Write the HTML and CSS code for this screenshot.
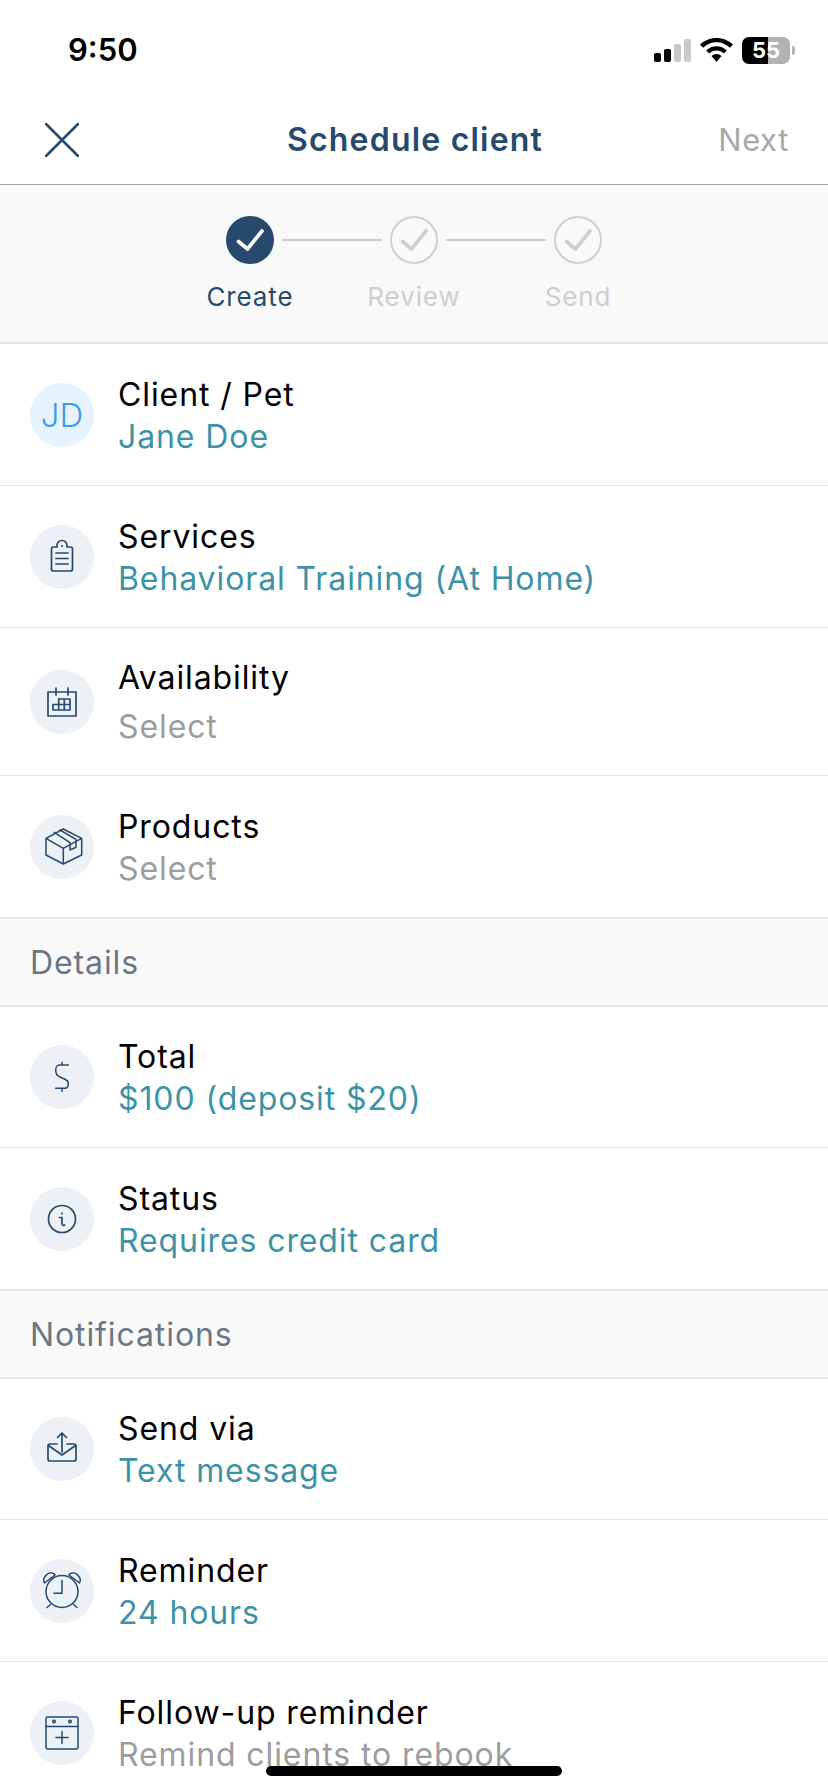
FILE: index.html
```html
<!DOCTYPE html>
<html lang="en">
<head>
<meta charset="utf-8">
<title>Schedule client</title>
<link rel="stylesheet" href="styles.css">
</head>
<body>
<div class="page">
  <div class="status">
    <span class="time">9:50</span>
    <div class="status-icons">
      <div class="signal"><i class="b1"></i><i class="b2"></i><i class="b3"></i><i class="b4"></i></div>
      <svg class="wifi" width="33" height="24" viewBox="0 0 33 24"><path d="M16.5 0C10 0 4.6 2.4 0 6.6l3 3.2C6.8 6.3 11.3 4.3 16.5 4.3s9.7 2 13.5 5.5l3-3.2C28.4 2.400 23 0 16.500 0z"/><path d="M16.500 8.200c-4 0-7.400 1.500-10.300 4.200l3 3.200c2-1.900 4.400-3 7.300-3s5.300 1.100 7.300 3l3-3.200c-2.900-2.700-6.300-4.200-10.300-4.200z"/><path d="M16.500 16c-2 0-3.600.7-5 2l5 6 5-6c-1.400-1.300-3-2-5-2z"/></svg>
      <div class="battery"><span class="battery-num">55</span></div>
      <i class="nub"></i>
    </div>
  </div>

  <header class="nav">
    <svg class="close" width="34" height="34" viewBox="0 0 34 34"><path d="M1 1l32 32M33 1L1 33"/></svg>
    <h1 class="title">Schedule client</h1>
    <span class="next">Next</span>
  </header>

  <section class="steps">
    <div class="track">
      <svg class="dot" width="48" height="48" viewBox="0 0 48 48"><circle class="dot-on" cx="24" cy="24" r="24"/><path class="tick-on" d="M12.500 25.500l9 7.500L36 15"/></svg>
      <i class="line"></i>
      <svg class="dot" width="48" height="48" viewBox="0 0 48 48"><circle class="dot-off" cx="24" cy="24" r="23"/><path class="tick-off" d="M12.500 25.500l9 7.500L36 15"/></svg>
      <i class="line"></i>
      <svg class="dot" width="48" height="48" viewBox="0 0 48 48"><circle class="dot-off" cx="24" cy="24" r="23"/><path class="tick-off" d="M12.500 25.500l9 7.500L36 15"/></svg>
    </div>
    <div class="labels">
      <span class="label label-on">Create</span>
      <span class="label">Review</span>
      <span class="label">Send</span>
    </div>
  </section>

  <div class="row">
    <div class="badge badge-jd">JD</div>
    <div class="text"><div class="name">Client / Pet</div><div class="val">Jane Doe</div></div>
  </div>
  <div class="row">
    <div class="badge"><svg class="ic" viewBox="0 0 64 64"><path d="M27 22v-1.500a5 5 0 0 1 10 0V22h3.500a2 2 0 0 1 2 2v20a2 2 0 0 1-2 2h-17a2 2 0 0 1-2-2V24a2 2 0 0 1 2-2z"/><path d="M26 28h12M26 33.500h12M26 39h12"/><circle class="fill" cx="32" cy="21" r="1"/></svg></div>
    <div class="text"><div class="name">Services</div><div class="val">Behavioral Training (At Home)</div></div>
  </div>
  <div class="row row-tall">
    <div class="badge"><svg class="ic" viewBox="0 0 64 64"><path d="M18 22h28v24H18zM26 18v7M38 18v7"/><path d="M23 34.500h17V40H23zM28.700 29h11.300v11M28.700 29v11M34.300 29v11"/></svg></div>
    <div class="text"><div class="name">Availability</div><div class="val val-muted">Select</div></div>
  </div>
  <div class="row">
    <div class="badge"><svg class="ic ic-thin" viewBox="0 0 64 64"><path d="M33.300 14L16 23.300V40l17.300 9L51.700 40V23.300zM16 23.300l17.300 10 18.400-10M33.300 33.300V49"/><path d="M24.300 17.300L40 27.700v7.300l6-2.700v-8L30 15"/></svg></div>
    <div class="text"><div class="name">Products</div><div class="val val-muted">Select</div></div>
  </div>

  <div class="section">Details</div>

  <div class="row">
    <div class="badge"><svg class="ic ic-thin" viewBox="0 0 64 64"><path d="M38.300 20H29.300C27 20 25.700 22.500 25.700 25C25.700 28 27.500 30.800 29.300 31.700L35 34.300C37 35.200 38.300 36.500 38.300 38.300C38.300 41 37 43.300 35 43.300H25.700M32 17.500V20M32 43.300v3"/></svg></div>
    <div class="text"><div class="name">Total</div><div class="val">$100 (deposit $20)</div></div>
  </div>
  <div class="row">
    <div class="badge"><svg class="ic" viewBox="0 0 64 64"><circle cx="32" cy="32" r="13.500"/><path d="M29.500 30.500H32v6.500a1.500 1.500 0 0 0 2.500 1"/><circle class="fill" cx="32" cy="26.500" r="1"/></svg></div>
    <div class="text"><div class="name">Status</div><div class="val">Requires credit card</div></div>
  </div>

  <div class="section">Notifications</div>

  <div class="row">
    <div class="badge"><svg class="ic" viewBox="0 0 64 64"><path d="M27 27h-7a2 2 0 0 0-2 2v13a2 2 0 0 0 2 2h24a2 2 0 0 0 2-2V29a2 2 0 0 0-2-2h-7"/><path d="M18.500 28.500L32 38l13.500-9.500M32 16v19M27.500 20.500L32 16l4.500 4.500"/></svg></div>
    <div class="text"><div class="name">Send via</div><div class="val">Text message</div></div>
  </div>
  <div class="row">
    <div class="badge"><svg class="ic ic-thin" viewBox="0 0 64 64"><circle cx="32" cy="32.500" r="16"/><path d="M32 21.500V34.300h-8M20.500 45.500l-3.500 3M43.500 45.500l3.500 3"/><path d="M14.500 24a6 6 0 0 1 1-7 6.500 6.500 0 0 1 8-2.500c1 .5 1.500 1 1.500 1.500zM49.500 24a6 6 0 0 0-1-7 6.500 6.500 0 0 0-8-2.500c-1 .5-1.500 1-1.500 1.500z"/></svg></div>
    <div class="text"><div class="name">Reminder</div><div class="val">24 hours</div></div>
  </div>
  <div class="row">
    <div class="badge"><svg class="ic ic-thin" viewBox="0 0 64 64"><rect x="16" y="16" width="32" height="32" rx="2"/><path d="M16 25.500h32M32 30.500v12M26 36.500h12"/><circle cx="24" cy="20.500" r="1.300"/><circle cx="40" cy="20.500" r="1.300"/></svg></div>
    <div class="text"><div class="name">Follow-up reminder</div><div class="val val-muted">Remind clients to rebook</div></div>
  </div>

  <i class="home"></i>
</div>
</body>
</html>
```
FILE: styles.css
```css
* { box-sizing: border-box; }
html, body { margin: 0; padding: 0; background: #fff; }
body { font-family: Inter, "Noto Sans", sans-serif; color: #000; }
i { display: block; }
.page { position: relative; width: 828px; height: 1792px; overflow: hidden; background: #fff; }

.status { height: 100px; display: flex; justify-content: space-between; align-items: center; padding: 0 33px 0 68px; }
.time { font-size: 31px; font-weight: 600; line-height: 1; margin-top: -2px; }
.status-icons { display: flex; align-items: center; }
.signal { display: flex; align-items: flex-end; gap: 3px; height: 23px; margin-right: 9px; }
.signal i { width: 7px; border-radius: 2px; background: #000; }
.signal .b1 { height: 9px; }
.signal .b2 { height: 13px; }
.signal .b3 { height: 18px; background: #c9c9c9; }
.signal .b4 { height: 23px; background: #c9c9c9; }
.wifi { margin-right: 9px; fill: #000; }
.battery { width: 48px; height: 27px; border-radius: 7px; background: linear-gradient(90deg, #000 0 26px, #b2b2b2 26px); display: flex; align-items: center; justify-content: center; }
.battery-num { color: #fff; font-size: 22px; font-weight: 700; line-height: 1; }
.nub { width: 3px; height: 9px; margin-left: 2px; border-radius: 0 3px 3px 0; background: #b2b2b2; }

.nav { height: 85px; padding: 0 39px 4px 41px; display: grid; grid-template-columns: 1fr auto 1fr; align-items: center; border-bottom: 1px solid #a9a9a9; }
.close { margin-left: 4px; fill: none; stroke: #27496d; stroke-width: 2.600; stroke-linecap: round; }
.title { margin: 0; font-size: 32px; font-weight: 600; letter-spacing: 1.200px; color: #27496d; line-height: 1.2; }
.next { justify-self: end; font-size: 31px; letter-spacing: .6px; color: #a8a8a8; line-height: 1.2; }

.steps { height: 159px; padding-top: 31px; background: #f9f9f9; border-bottom: 2px solid #dfe8e8; }
.track { display: flex; align-items: center; justify-content: center; gap: 8px; }
.line { width: 100px; height: 2px; background: #cbcbcb; }
.dot { display: block; }
.dot-on { fill: #27496d; }
.dot-off { fill: none; stroke: #cfcfcf; stroke-width: 2; }
.tick-on, .tick-off { fill: none; stroke-width: 3.600; stroke-linecap: round; stroke-linejoin: round; }
.tick-on { stroke: #fff; }
.tick-off { stroke: #cfcfcf; }
.labels { display: flex; justify-content: center; margin-top: 17px; }
.label { width: 164px; text-align: center; font-size: 26px; letter-spacing: .9px; line-height: 1.2; color: #cfcfcf; }
.label-on { color: #27496d; }

.row { height: 142px; display: flex; align-items: center; gap: 24px; padding-left: 30px; border-bottom: 1px solid #e2e9e9; }
.row:last-of-type { border-bottom: 0; }
.row-tall { height: 148px; }
.badge { width: 64px; height: 64px; flex: none; border-radius: 50%; background: #edf0f4; display: flex; align-items: center; justify-content: center; }
.badge-jd { background: #e6f3fe; color: #3d9ae8; font-size: 33px; font-weight: 300; }
.ic { display: block; width: 64px; height: 64px; fill: none; stroke: #27496d; stroke-width: 1.700; stroke-linejoin: round; stroke-linecap: round; }
.ic-thin { stroke-width: 1.500; }
.ic .fill { fill: #27496d; stroke: none; }

.text { display: flex; flex-direction: column; margin-top: 2px; }
.name { font-size: 32px; letter-spacing: .9px; line-height: 42px; color: #000; }
.val { font-size: 32px; letter-spacing: .9px; line-height: 42px; color: #3d93a5; }
.val-muted { color: #9d9d9d; }
.row-tall .val { margin-top: 7px; }

.section { height: 90px; margin: -1px 0 -1px; display: flex; align-items: center; padding-left: 30px; font-size: 32px; letter-spacing: .9px; color: #6b7785; background: #f9f9f9; border-top: 2px solid #dfe8e8; border-bottom: 2px solid #dfe8e8; }

.home { position: absolute; left: 266px; top: 1766px; width: 296px; height: 10px; border-radius: 5px; background: #000; }
```
